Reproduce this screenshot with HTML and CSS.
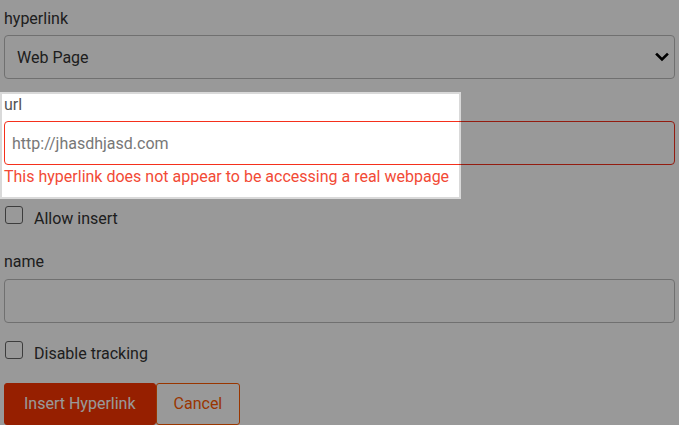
FILE: index.html
```html
<!DOCTYPE html>
<html lang="en">
<head>
<meta charset="utf-8">
<title>Insert Hyperlink</title>
<link rel="stylesheet" href="styles.css">
</head>
<body>
<form class="form">
  <div class="group">
    <label class="label" for="kind">hyperlink</label>
    <div class="select-wrap">
      <select id="kind" class="control select">
        <option>Web Page</option>
      </select>
      <svg class="chevron" width="14" height="10" viewBox="0 0 14 10" aria-hidden="true">
        <path d="M2 2.5 L7 7.5 L12 2.5" fill="none" stroke="#000" stroke-width="2.6" stroke-linecap="square"/>
      </svg>
    </div>
  </div>

  <div class="group group-url">
    <div class="spot"></div>
    <label class="label label-url" for="url">url</label>
    <input id="url" class="control input input-error" type="text" placeholder="http://jhasdhjasd.com">
    <div class="error">This hyperlink does not appear to be accessing a real webpage</div>
  </div>

  <label class="check">
    <input type="checkbox" class="box">
    <span>Allow insert</span>
  </label>

  <div class="group group-name">
    <label class="label label-name" for="name">name</label>
    <input id="name" class="control input" type="text">
  </div>

  <label class="check check-last">
    <input type="checkbox" class="box">
    <span>Disable tracking</span>
  </label>

  <div class="actions">
    <button type="button" class="btn btn-primary">Insert Hyperlink</button>
    <button type="button" class="btn btn-outline">Cancel</button>
  </div>
</form>
</body>
</html>
```

FILE: styles.css
```css
html, body {
  margin: 0;
  padding: 0;
  background: #ffffff;
  overflow: hidden;
}

body {
  font-family: Roboto, "Liberation Sans", Arial, sans-serif;
  font-size: 16px;
  line-height: 24px;
  color: #333333;
}

.form {
  padding: 7px 4px 0 4px;
}

.group {
  display: flex;
  flex-direction: column;
  margin-bottom: 14px;
}

.label {
  display: block;
  margin-bottom: 4px;
  color: #333333;
}

.label-url {
  color: #555555;
}

.label-name {
  margin-bottom: 5px;
}

.control {
  box-sizing: border-box;
  width: 100%;
  height: 44px;
  margin: 0;
  font-family: inherit;
  font-size: 16px;
  color: #333333;
  background: #ffffff;
  border: 1px solid #bbbbbb;
  border-radius: 4px;
  outline: none;
}

.select-wrap {
  position: relative;
}

.select {
  appearance: none;
  -webkit-appearance: none;
  padding: 0 36px 0 12px;
}

.chevron {
  position: absolute;
  right: 6px;
  top: 17px;
}

.input {
  padding: 0 7px;
}

.input::placeholder {
  color: #777777;
  opacity: 1;
}

.input-error {
  border-color: #f5301c;
}

.error {
  color: #f24a36;
}

.group-url {
  position: relative;
  margin-bottom: 18px;
}

.spot {
  position: absolute;
  left: -4px;
  top: -1px;
  width: 461px;
  height: 107px;
  box-sizing: border-box;
  border: 2px solid rgba(0, 0, 0, 0.15);
  box-shadow: 0 0 0 3000px rgba(0, 0, 0, 0.4);
  pointer-events: none;
  z-index: 10;
}

.group-name {
  margin-bottom: 19px;
}

.check {
  display: flex;
  align-items: flex-start;
  gap: 11px;
  margin-bottom: 19px;
  color: #333333;
}

.check-last {
  margin-bottom: 17px;
}

.box {
  appearance: none;
  -webkit-appearance: none;
  box-sizing: border-box;
  width: 18px;
  height: 18px;
  margin: -1px 0 0 1px;
  border: 1.5px solid #666666;
  border-radius: 3px;
  background: #ffffff;
  flex: none;
}

.actions {
  display: flex;
}

.btn {
  box-sizing: border-box;
  height: 42px;
  font-family: inherit;
  font-size: 16px;
  line-height: 24px;
  border-radius: 3px;
  cursor: pointer;
}

.btn-primary {
  padding: 0 19px;
  background: #fb3400;
  border: 1px solid #fb3400;
  color: #ffffff;
}

.btn-outline {
  padding: 0 17px;
  background: #ffffff;
  border: 1px solid #ff5a00;
  color: #ff5a00;
  margin-left: 0;
}
```
